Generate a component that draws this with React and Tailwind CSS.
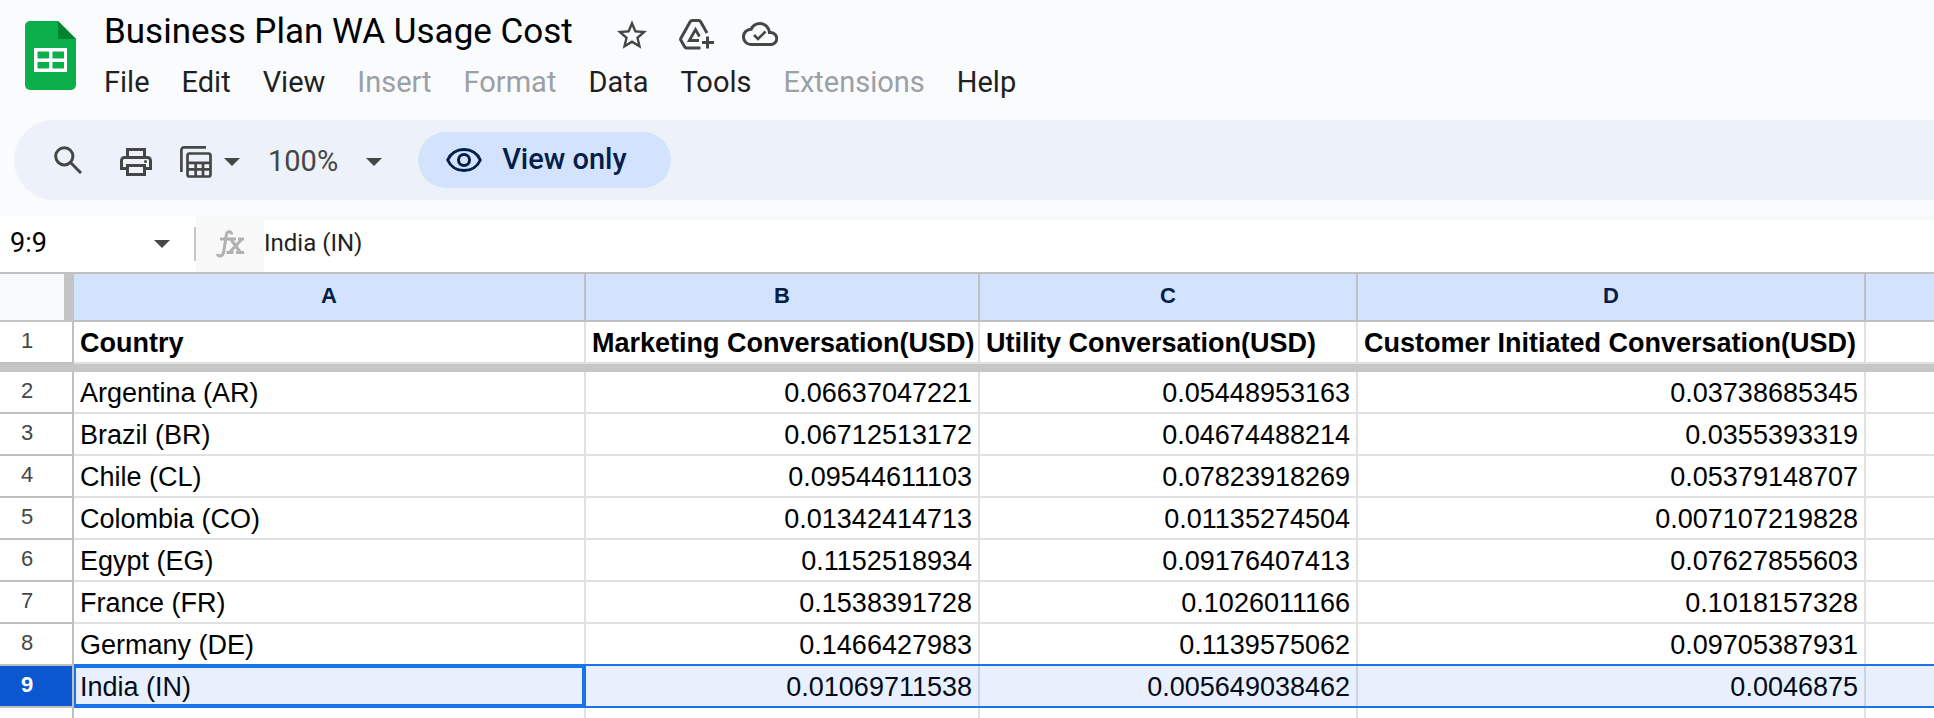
import React, { useState } from "react";

const menuItems = [
  { label: "File" },
  { label: "Edit" },
  { label: "View" },
  { label: "Insert", disabled: true },
  { label: "Format", disabled: true },
  { label: "Data" },
  { label: "Tools" },
  { label: "Extensions", disabled: true },
  { label: "Help" },
];

const rows = [
  { id: 2, country: "Argentina (AR)", marketing: "0.06637047221", utility: "0.05448953163", customer: "0.03738685345" },
  { id: 3, country: "Brazil (BR)", marketing: "0.06712513172", utility: "0.04674488214", customer: "0.0355393319" },
  { id: 4, country: "Chile (CL)", marketing: "0.09544611103", utility: "0.07823918269", customer: "0.05379148707" },
  { id: 5, country: "Colombia (CO)", marketing: "0.01342414713", utility: "0.01135274504", customer: "0.007107219828" },
  { id: 6, country: "Egypt (EG)", marketing: "0.1152518934", utility: "0.09176407413", customer: "0.07627855603" },
  { id: 7, country: "France (FR)", marketing: "0.1538391728", utility: "0.1026011166", customer: "0.1018157328" },
  { id: 8, country: "Germany (DE)", marketing: "0.1466427983", utility: "0.1139575062", customer: "0.09705387931" },
  { id: 9, country: "India (IN)", marketing: "0.01069711538", utility: "0.005649038462", customer: "0.0046875" },
];

const SELECTED_ROW = 9;

function SheetsLogo() {
  return (
    <svg width="51" height="69" viewBox="0 0 51 69" aria-hidden="true">
      <path d="M5 0h28l18 18v46a5 5 0 0 1-5 5H5a5 5 0 0 1-5-5V5a5 5 0 0 1 5-5z" fill="#0aaf4c" />
      <path d="M33 0l18 18H33z" fill="#00832d" />
      <path
        fillRule="evenodd"
        d="M9 27h33v24H9zM12.500 30.500v7h11.500v-7zM27.500 30.500v7H39v-7zM12.500 41v6.500h11.500V41zM27.500 41v6.500H39V41z"
        fill="#fff"
      />
    </svg>
  );
}

function StarIcon() {
  return (
    <svg width="30" height="29" viewBox="2 2 20 19" fill="#444746" aria-hidden="true">
      <path d="M22 9.240l-7.190-.620L12 2 9.190 8.630 2 9.240l5.460 4.730L5.820 21 12 17.270 18.180 21l-1.630-7.030L22 9.240zM12 15.400l-3.760 2.270 1-4.280-3.320-2.880 4.380-.380L12 6.100l1.710 4.040 4.380.380-3.320 2.880 1 4.280L12 15.400z" />
    </svg>
  );
}

function DriveIcon() {
  return (
    <svg width="35" height="31" viewBox="0 0 35 31" fill="none" stroke="#444746" strokeWidth="3" aria-hidden="true">
      <path d="M28 14L21.500 2.500a2 2 0 0 0-1.700-1H13a2 2 0 0 0-1.700 1L1.900 19.200a2 2 0 0 0 0 2l3.900 6.800a2 2 0 0 0 1.700 1H21.500" />
      <path d="M20.500 17.500L16.500 10.500 10.300 21.500h9.700" strokeWidth="2.800" />
      <path d="M28.500 17.500v12M23 23.500h12" />
    </svg>
  );
}

function CloudIcon() {
  return (
    <svg width="36" height="24" viewBox="0 0 36 24" fill="none" stroke="#444746" strokeWidth="3" aria-hidden="true">
      <path d="M9 22.500h19.500a6 6 0 0 0 .500-12h-1.500C27 5.500 23 1.500 18 1.500c-4 0-7.300 2.200-8.800 5.700A7.600 7.600 0 0 0 9 22.500z" />
      <path d="M12 13l4 4 7.500-7.500" strokeWidth="2.600" />
    </svg>
  );
}

function SearchIcon() {
  return (
    <svg width="28" height="28" viewBox="0 0 28 28" fill="none" stroke="#444746" strokeWidth="3" aria-hidden="true">
      <circle cx="10.300" cy="10.300" r="8.600" />
      <path d="M16.500 16.500l10.500 10.500" />
    </svg>
  );
}

function PrintIcon() {
  return (
    <svg width="32" height="28" viewBox="0 0 32 28" fill="none" stroke="#444746" strokeWidth="3" aria-hidden="true">
      <path d="M7.500 9V1.500h17V9" />
      <path d="M7 20.500H1.500V12.500A3 3 0 0 1 4.500 9.500h23a3 3 0 0 1 3 3v8H25" />
      <path d="M7.500 17.500h17v9h-17z" />
      <circle cx="25.500" cy="13.500" r="1.500" fill="#444746" stroke="none" />
    </svg>
  );
}

function FilterViewIcon() {
  return (
    <svg width="32" height="32" viewBox="0 0 32 32" fill="none" stroke="#444746" strokeWidth="2.700" aria-hidden="true">
      <path d="M1.400 26V4a2.600 2.600 0 0 1 2.600-2.600h22" />
      <rect x="7.500" y="7.500" width="23" height="23" rx="2" />
      <path d="M7.500 16.800h23M7.500 23.400h23M15.700 17v13.500M23 17v13.500" />
    </svg>
  );
}

function EyeIcon() {
  return (
    <svg width="36" height="24" viewBox="0 0 36 24" fill="none" stroke="#041e49" strokeWidth="3" aria-hidden="true">
      <path d="M1.700 12C4.500 5.500 10.700 1.500 18 1.500S31.500 5.500 34.300 12C31.500 18.500 25.300 22.500 18 22.500S4.500 18.500 1.700 12z" />
      <circle cx="18" cy="12" r="5.500" />
    </svg>
  );
}

function FxIcon() {
  return (
    <svg width="28" height="28" viewBox="0 0 28 28" fill="none" stroke="#b1b1b1" strokeWidth="3" aria-hidden="true">
      <path d="M15.500 4.500c0-3.500-4.500-4-5.200.500L7.700 22c-.700 4.500-5.500 5.500-6.200 2" />
      <path d="M4 9h16M22 9h6M10.500 22.500h7M20 22.500h8" />
      <path d="M15 9.500l9.500 13M25.500 9.500L13.500 22.500" />
    </svg>
  );
}

function Caret() {
  return (
    <svg width="16" height="8" viewBox="0 0 16 8" aria-hidden="true">
      <path d="M0 0h16L8 8z" fill="#444746" />
    </svg>
  );
}

function Header() {
  return (
    <header className="flex items-start pt-2 pl-[25px]">
      <a href="#home" aria-label="Sheets home" className="mt-[13px] mr-6 shrink-0">
        <SheetsLogo />
      </a>
      <div>
        <div className="flex h-12 items-center pl-1">
          <h1 className="mr-11 text-[35px] leading-12 text-black">Business Plan WA Usage Cost</h1>
          <div className="mt-1 flex items-center gap-7">
            <button type="button" aria-label="Star" className="mr-1">
              <StarIcon />
            </button>
            <button type="button" aria-label="Add shortcut to Drive">
              <DriveIcon />
            </button>
            <button type="button" aria-label="Document status">
              <CloudIcon />
            </button>
          </div>
        </div>
        <nav className="flex h-[52px] items-center gap-8 pl-1">
          {menuItems.map((item) => (
            <button
              key={item.label}
              type="button"
              disabled={item.disabled}
              className={`text-[29px] leading-10 ${item.disabled ? "text-[#9aa0a6]" : "text-[#1f1f1f]"}`}
            >
              {item.label}
            </button>
          ))}
        </nav>
      </div>
    </header>
  );
}

function Toolbar() {
  return (
    <div className="mt-3 ml-[14px] flex h-20 shrink-0 items-center rounded-l-full bg-[#edf1fa] pl-10">
      <button type="button" aria-label="Search the menus" className="mr-[38px]">
        <SearchIcon />
      </button>
      <button type="button" aria-label="Print" className="mt-1 mr-7">
        <PrintIcon />
      </button>
      <button type="button" aria-label="Filter views" className="mt-1 mr-7 flex items-center gap-3">
        <FilterViewIcon />
        <Caret />
      </button>
      <button type="button" aria-label="Zoom" className="mt-1 flex items-center gap-7 text-[29px] text-[#444746]">
        100%
        <Caret />
      </button>
      <button
        type="button"
        className="ml-9 flex h-14 items-center gap-5 rounded-full bg-[#d3e3fd] pr-11 pl-7 text-[29px] font-medium text-[#041e49]"
      >
        <EyeIcon />
        View only
      </button>
    </div>
  );
}

function FormulaBar() {
  const [range, setRange] = useState("9:9");
  const [formula, setFormula] = useState("India (IN)");

  return (
    <div className="mt-4 flex h-[58px] shrink-0 border-b-2 border-[#c0c0c0] bg-white">
      <div className="flex w-[196px] items-center">
        <input
          aria-label="Name box"
          value={range}
          onChange={(e) => setRange(e.target.value)}
          className="h-12 w-[154px] pb-[2px] pl-[10px] text-[27px] text-black outline-none"
        />
        <button type="button" aria-label="Named ranges">
          <Caret />
        </button>
        <div className="ml-auto h-[34px] w-[2px] bg-[#c7c7c7]" />
      </div>
      <div className="flex w-[68px] items-center justify-center bg-[#f8f8f8]">
        <FxIcon />
      </div>
      <input
        aria-label="Formula bar"
        value={formula}
        onChange={(e) => setFormula(e.target.value)}
        className="flex-1 border-t-4 border-[#f8f8f8] pb-[6px] text-[24px] text-[#1f1f1f] outline-none"
      />
    </div>
  );
}

function ColumnHeader({ children }) {
  return (
    <th
      scope="col"
      className="border-r-2 border-b-2 border-[#c0c0c0] bg-[#d3e3fd] pb-[2px] text-[22px] leading-8 font-bold text-[#041e49] last:border-r-0"
    >
      {children}
    </th>
  );
}

function TitleCell({ children }) {
  return (
    <td className="border-r-2 border-b-2 border-[#e1e1e1] px-[6px] pt-[2px] text-[27px] leading-[38px] font-bold whitespace-nowrap text-black last:border-r-0">
      {children}
    </td>
  );
}

function RowHeader({ id, selected }) {
  return (
    <th
      scope="row"
      className={`h-[42px] border-r-2 border-b-2 border-[#c0c0c0] pr-[18px] pb-[2px] text-center text-[22px] leading-8 ${
        selected ? "bg-[#0b57d0] font-bold text-white" : "font-normal text-[#444746]"
      }`}
    >
      {id}
    </th>
  );
}

function Cell({ children, selected, active, numeric }) {
  return (
    <td
      className={`relative h-[42px] border-r-2 border-b-2 px-[6px] pt-[2px] text-[27px] leading-[38px] whitespace-nowrap last:border-r-0 ${
        selected ? "border-[#cbd3e4] bg-[#e8effd] text-[#040a18]" : "border-[#e1e1e1] text-black"
      } ${numeric ? "text-right" : ""}`}
    >
      {children}
      {selected && (
        <span
          className={`absolute -top-[2px] -right-[2px] -bottom-[2px] left-0 border-[#1a73e8] ${
            active ? "border-4 border-l-2" : "border-y-2"
          }`}
        />
      )}
    </td>
  );
}

function SheetRow({ row }) {
  const selected = row.id === SELECTED_ROW;

  return (
    <tr>
      <RowHeader id={row.id} selected={selected} />
      <Cell selected={selected} active={selected}>
        {row.country}
      </Cell>
      <Cell selected={selected} numeric>
        {row.marketing}
      </Cell>
      <Cell selected={selected} numeric>
        {row.utility}
      </Cell>
      <Cell selected={selected} numeric>
        {row.customer}
      </Cell>
      <Cell selected={selected} />
    </tr>
  );
}

function Sheet() {
  return (
    <table className="w-full table-fixed border-separate border-spacing-0 bg-white font-['Liberation_Sans',Arial,sans-serif]">
      <colgroup>
        <col className="w-[74px]" />
        <col className="w-[512px]" />
        <col className="w-[394px]" />
        <col className="w-[378px]" />
        <col className="w-[508px]" />
        <col />
      </colgroup>
      <thead>
        <tr className="h-12">
          <td className="border-r-[10px] border-b-2 border-[#c4c4c4] bg-[#f8f9fa]"></td>
          <ColumnHeader>A</ColumnHeader>
          <ColumnHeader>B</ColumnHeader>
          <ColumnHeader>C</ColumnHeader>
          <ColumnHeader>D</ColumnHeader>
          <ColumnHeader></ColumnHeader>
        </tr>
      </thead>
      <tbody>
        <tr>
          <RowHeader id={1} />
          <TitleCell>Country</TitleCell>
          <TitleCell>Marketing Conversation(USD)</TitleCell>
          <TitleCell>Utility Conversation(USD)</TitleCell>
          <TitleCell>Customer Initiated Conversation(USD)</TitleCell>
          <TitleCell></TitleCell>
        </tr>
        {/* frozen row divider */}
        <tr className="h-2">
          <td colSpan={6} className="bg-[#c6c6c6] p-0"></td>
        </tr>
        {rows.map((row) => (
          <SheetRow key={row.id} row={row} />
        ))}
        {/* empty row under the data */}
        <SheetRow row={{ id: "" }} />
      </tbody>
    </table>
  );
}

function App() {
  return (
    <div className="flex h-screen flex-col overflow-hidden bg-[#f9fbfd] font-[Roboto,sans-serif]">
      <Header />
      <Toolbar />
      <FormulaBar />
      <main className="flex-1 overflow-hidden bg-white">
        <Sheet />
      </main>
    </div>
  );
}

export default App;
